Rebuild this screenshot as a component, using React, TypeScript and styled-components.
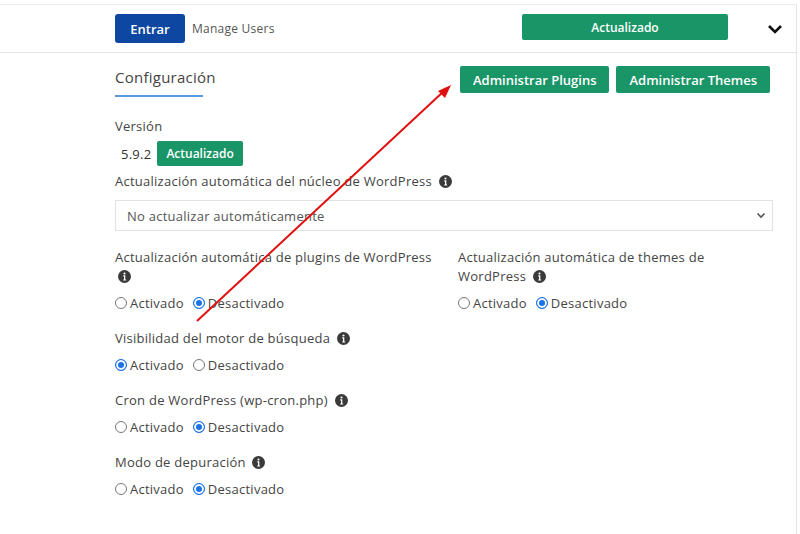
import React from 'react';
import styled, { createGlobalStyle } from 'styled-components';

const GlobalStyle = createGlobalStyle`
  html, body {
    margin: 0;
    padding: 0;
    background: #fff;
  }
  body {
    font-family: 'Open Sans', 'Liberation Sans', sans-serif;
    color: #444;
    letter-spacing: 0.25px;
  }
`;

type RadioProps = { checked: boolean; label: string };

const Radio = ({ checked, label }: RadioProps) => (
  <RadioLabel>
    <RadioDot $checked={checked} />
    {label}
  </RadioLabel>
);

const InfoIcon = () => (
  <svg width="13" height="13" viewBox="0 0 16 16">
    <circle cx="8" cy="8" r="8" fill="#3a3a3a" />
    <circle cx="8" cy="4.3" r="1.3" fill="#fff" />
    <path d="M6.4 6.6h2.6v5h1v1.4H6.4v-1.4h1v-3.6h-1z" fill="#fff" />
  </svg>
);

type SettingProps = { title: string; on: boolean };

const Setting = ({ title, on }: SettingProps) => (
  <Group>
    <Label>
      {title} <InfoIcon />
    </Label>
    <Radios>
      <Radio checked={on} label="Activado" />
      <Radio checked={!on} label="Desactivado" />
    </Radios>
  </Group>
);

const App = () => {
  return (
    <>
      <GlobalStyle />
      <Card>
        <Header>
          <Left>
            <BlueButton>Entrar</BlueButton>
            <LinkText>Manage Users</LinkText>
          </Left>
          <StatusButton>Actualizado</StatusButton>
          <Chevron>
            <svg width="16" height="10" viewBox="0 0 16 10">
              <path d="M2 2l6 6 6-6" stroke="#111" strokeWidth="2.6" fill="none" />
            </svg>
          </Chevron>
        </Header>
        <Body>
          <TopRow>
            <Tab>Configuración</Tab>
            <Actions>
              <GreenButton>Administrar Plugins</GreenButton>
              <GreenButton>Administrar Themes</GreenButton>
            </Actions>
          </TopRow>

          <FieldLabel>Versión</FieldLabel>
          <VersionRow>
            <span>5.9.2</span>
            <Badge>Actualizado</Badge>
          </VersionRow>

          <Label>
            Actualización automática del núcleo de WordPress <InfoIcon />
          </Label>
          <Select>
            <span>No actualizar automáticamente</span>
            <svg width="10" height="7" viewBox="0 0 10 7">
              <path d="M1.5 1.5l3.5 3.5 3.5-3.5" stroke="#555" strokeWidth="1.6" fill="none" />
            </svg>
          </Select>

          <Columns>
            <Setting title="Actualización automática de plugins de WordPress" on={false} />
            <Setting title="Actualización automática de themes de WordPress" on={false} />
          </Columns>
          <Setting title="Visibilidad del motor de búsqueda" on={true} />
          <Setting title="Cron de WordPress (wp-cron.php)" on={false} />
          <Setting title="Modo de depuración" on={false} />
        </Body>
        <Arrow width="800" height="534" viewBox="0 0 800 534">
          <line x1="197" y1="321" x2="444" y2="91" stroke="#e01010" strokeWidth="2" />
          <path d="M451 85 L438 91 L445 98 Z" fill="#e01010" />
        </Arrow>
      </Card>
    </>
  );
};

export default App;

const Card = styled.div`
  position: relative;
  width: 797px;
  height: 530px;
  margin-top: 4px;
  border-top: 1px solid #ececec;
  border-right: 1px solid #e6e6e6;
  box-sizing: border-box;
`;

const Header = styled.div`
  display: flex;
  align-items: center;
  height: 48px;
  padding: 0 0 0 115px;
  border-bottom: 1px solid #e4e4e4;
  box-sizing: border-box;
`;

const Left = styled.div`
  display: flex;
  align-items: center;
  gap: 7px;
  flex: 1;
`;

const BlueButton = styled.button`
  width: 70px;
  height: 29px;
  border: none;
  border-radius: 3px;
  background: #0d47a1;
  color: #fff;
  font-family: inherit;
  font-size: 13px;
  font-weight: 600;
  letter-spacing: 0;
  padding: 0;
`;

const LinkText = styled.span`
  font-size: 12px;
  color: #555;
`;

const StatusButton = styled.button`
  width: 206px;
  height: 26px;
  margin-top: -3px;
  border: none;
  border-radius: 2px;
  background: #1a9567;
  color: #fff;
  font-family: inherit;
  font-size: 12px;
  font-weight: 600;
  letter-spacing: 0;
`;

const Chevron = styled.div`
  display: flex;
  margin: 0 13px 0 39px;
`;

const Body = styled.div`
  padding: 0 23px 0 115px;
`;

const TopRow = styled.div`
  display: flex;
  justify-content: space-between;
  align-items: flex-start;
  padding-top: 13px;
  margin-bottom: 19px;
`;

const Tab = styled.div`
  width: 88px;
  padding-top: 1px;
  padding-bottom: 8px;
  line-height: 20px;
  border-bottom: 2px solid #5a9be0;
  font-size: 15px;
  color: #444;
  white-space: nowrap;
`;

const Actions = styled.div`
  display: flex;
  gap: 7px;
  margin-right: 3px;
`;

const GreenButton = styled.button`
  height: 27px;
  padding: 0 13px;
  border: none;
  border-radius: 2px;
  background: #1a9567;
  color: #fff;
  font-family: inherit;
  font-size: 13px;
  font-weight: 600;
  letter-spacing: 0;
`;

const FieldLabel = styled.div`
  font-size: 13px;
  color: #444;
  line-height: 20px;
`;

const VersionRow = styled.div`
  display: flex;
  align-items: center;
  gap: 6px;
  height: 25px;
  margin: 5px 0 6px 6px;
  font-size: 13px;
  color: #333;
`;

const Badge = styled.span`
  background: #1a9567;
  color: #fff;
  font-size: 12px;
  font-weight: 600;
  letter-spacing: 0;
  line-height: 25px;
  padding: 0 9px;
  border-radius: 2px;
`;

const Label = styled.div`
  font-size: 13px;
  line-height: 19px;
  color: #444;
  svg {
    vertical-align: -2px;
    margin-left: 3px;
  }
`;

const Select = styled.div`
  display: flex;
  align-items: center;
  justify-content: space-between;
  height: 31px;
  margin: 9px 0 17px;
  padding: 0 6px 0 11px;
  border: 1px solid #e2e2e2;
  font-size: 13px;
  color: #555;
  box-sizing: border-box;
`;

const Columns = styled.div`
  display: grid;
  grid-template-columns: 325px 280px;
  column-gap: 18px;
`;

const Group = styled.div`
  margin-bottom: 17px;
`;

const Radios = styled.div`
  display: flex;
  gap: 9px;
  margin-top: 8px;
`;

const RadioLabel = styled.label`
  display: flex;
  align-items: center;
  gap: 3px;
  height: 18px;
  font-size: 13px;
  color: #444;
`;

const RadioDot = styled.span<{ $checked: boolean }>`
  width: 12px;
  height: 12px;
  border-radius: 50%;
  box-sizing: border-box;
  border: 1px solid ${(p) => (p.$checked ? '#1a73e8' : '#777')};
  background: ${(p) => (p.$checked ? '#1a73e8' : '#fff')};
  box-shadow: ${(p) => (p.$checked ? 'inset 0 0 0 2px #fff' : 'none')};
`;

const Arrow = styled.svg`
  position: absolute;
  top: -5px;
  left: 0;
  pointer-events: none;
`;
